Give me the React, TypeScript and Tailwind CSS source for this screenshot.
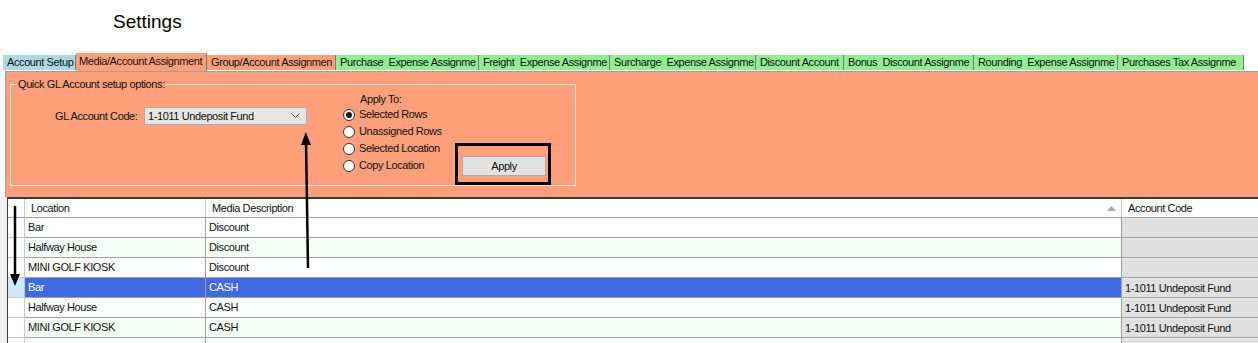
import React from "react";

const tabs: { label: string; w: number; bg: string; sel?: boolean }[] = [
  { label: "Account Setup", w: 73, bg: "bg-[#add8e6]" },
  { label: "Media/Account Assignment", w: 131, bg: "bg-[#ffa07a]", sel: true },
  { label: "Group/Account Assignmen", w: 129, bg: "bg-[#ffa07a]" },
  { label: "Purchase  Expense Assignme", w: 143, bg: "bg-[#90ee90]" },
  { label: "Freight  Expense Assignme", w: 131, bg: "bg-[#90ee90]" },
  { label: "Surcharge  Expense Assignme", w: 146, bg: "bg-[#90ee90]" },
  { label: "Discount Account", w: 88, bg: "bg-[#90ee90]" },
  { label: "Bonus  Discount Assignme", w: 130, bg: "bg-[#90ee90]" },
  { label: "Rounding  Expense Assignme", w: 144, bg: "bg-[#90ee90]" },
  { label: "Purchases Tax Assignme", w: 126, bg: "bg-[#90ee90]" },
];

const rows: { loc: string; media: string; acct: string; sel?: boolean }[] = [
  { loc: "Bar", media: "Discount", acct: "" },
  { loc: "Halfway House", media: "Discount", acct: "" },
  { loc: "MINI GOLF KIOSK", media: "Discount", acct: "" },
  { loc: "Bar", media: "CASH", acct: "1-1011 Undeposit Fund", sel: true },
  { loc: "Halfway House", media: "CASH", acct: "1-1011 Undeposit Fund" },
  { loc: "MINI GOLF KIOSK", media: "CASH", acct: "1-1011 Undeposit Fund" },
  { loc: "Bar", media: "PETTY CASH", acct: "2-1010 Ebony Chequing Acct" },
];

function Radio({ checked, label }: { checked?: boolean; label: string }) {
  return (
    <div className="flex items-center h-[17px] whitespace-nowrap">
      <div className="w-[12px] h-[12px] shrink-0 rounded-full border border-[#333333] bg-white flex items-center justify-center">
        {checked && <div className="w-[6px] h-[6px] rounded-full bg-[#1a1a1a]" />}
      </div>
      <span className="ml-[4px] text-[11px] tracking-[-0.4px] text-[#111]">{label}</span>
    </div>
  );
}

export default function App() {
  return (
    <div
      className="relative w-[1258px] h-[343px] overflow-hidden bg-white text-black"
      style={{ fontFamily: '"Liberation Sans", Arial, sans-serif' }}
    >
      {/* Title */}
      <div className="h-[53px] pl-[113px] pt-[11px] text-[19px] leading-[22px]">Settings</div>

      {/* Tabs */}
      <div className="flex items-end h-[18px] pl-[3px] relative z-10">
        {tabs.map((t) => (
          <div
            key={t.label}
            style={{ width: t.w }}
            className={`flex items-center overflow-hidden border-r border-[#7a7a7a] whitespace-pre text-[11px] tracking-[-0.4px] leading-none text-[#111] ${t.bg} ${
              t.sel ? "h-[18px] pl-[3px] pb-[2px]" : "h-[15px] pl-[4px] mb-[1px]"
            }`}
          >
            {t.label}
          </div>
        ))}
      </div>

      {/* Panel */}
      <div className="ml-[5px] border-l border-t border-[#a0a0a0] bg-[#ffa07a] h-[126px] relative">
        {/* group box */}
        <div className="absolute left-[4px] top-[12px] w-[566px] h-[102px] border border-[#f3e2da]">
          <div className="absolute left-[6px] -top-[7px] px-[1px] bg-[#ffa07a] text-[11px] tracking-[-0.4px] leading-[13px] text-[#111] whitespace-nowrap">
            Quick GL Account setup options:
          </div>
          <div className="flex pt-[7px] pl-[44px]">
            <div className="flex items-start pt-[15px] whitespace-nowrap">
              <span className="w-[80px] text-right text-[11px] tracking-[-0.4px] leading-[18px] mr-[9px] text-[#111]">
                GL Account Code:
              </span>
              <div className="w-[163px] h-[18px] bg-[#e5e5e5] border border-[#adadad] flex items-center justify-between pl-[3px] pr-[6px]">
                <span className="text-[11px] tracking-[-0.4px] text-[#111]">1-1011 Undeposit Fund</span>
                <svg width="9" height="6" viewBox="0 0 9 6">
                  <path d="M0.5 0.5 L4.5 4.5 L8.5 0.5" stroke="#555" strokeWidth="1" fill="none" />
                </svg>
              </div>
            </div>
            <div className="ml-[36px] w-[105px] flex flex-col">
              <span className="text-[11px] tracking-[-0.4px] leading-[14px] pl-[17px] text-[#111]">Apply To:</span>
              <Radio checked label="Selected Rows" />
              <Radio label="Unassigned Rows" />
              <Radio label="Selected Location" />
              <Radio label="Copy Location" />
            </div>
            <div className="ml-[14px] mt-[64px] relative">
              <div className="w-[84px] h-[20px] bg-[#e1e1e1] border border-[#adadad] flex items-center justify-center text-[11px] tracking-[-0.4px] text-[#111]">
                Apply
              </div>
              <div className="absolute -left-[7px] -top-[13px] w-[96px] h-[42px] border-[3px] border-black" />
            </div>
          </div>
        </div>
      </div>

      {/* Grid */}
      <div className="flex bg-[#f0f0f0]">
        <div className="w-[7px] shrink-0" />
        <div className="flex-1 border-l border-t-2 border-[#3a3a3a] bg-white">
          {/* header */}
          <div className="flex h-[19px] border-b border-[#a0a0a0] text-[11px] tracking-[-0.4px] text-[#111] whitespace-nowrap">
            <div className="w-[17px] shrink-0 border-r border-[#c8c8c8]" />
            <div className="w-[181px] shrink-0 border-r border-[#c8c8c8] pl-[6px] flex items-center">Location</div>
            <div className="w-[916px] shrink-0 border-r border-[#c8c8c8] pl-[6px] flex items-center justify-between pr-[5px]">
              <span>Media Description</span>
              <svg width="9" height="5" viewBox="0 0 9 5">
                <path d="M0 5 L4.5 0 L9 5 Z" fill="#a8a8a8" />
              </svg>
            </div>
            <div className="flex-1 pl-[6px] flex items-center">Account Code</div>
          </div>
          {rows.map((r, i) => {
            const alt = i % 2 === 1;
            const bg = r.sel ? "bg-[#4169e1] text-white" : alt ? "bg-[#f5fffa] text-[#111]" : "bg-white text-[#111]";
            return (
              <div key={i} className="flex h-[20px] text-[11px] tracking-[-0.4px] whitespace-nowrap">
                <div
                  className={`w-[17px] shrink-0 border-r border-b border-[#c8c8c8] ${
                    r.sel ? "bg-[#cce8ff]" : "bg-white"
                  }`}
                />
                <div className={`w-[181px] shrink-0 border-r border-b border-[#a0a0a0] pl-[3px] flex items-center ${bg}`}>
                  {r.loc}
                </div>
                <div className={`w-[916px] shrink-0 border-r border-b border-[#a0a0a0] pl-[3px] flex items-center ${bg}`}>
                  {r.media}
                </div>
                <div className="flex-1 bg-[#e0e0e0] border-b border-t border-t-[#ececec] border-b-[#a0a0a0] pl-[3px] flex items-center text-[#111] overflow-hidden">
                  {r.acct}
                </div>
              </div>
            );
          })}
        </div>
      </div>

      {/* Annotation arrows */}
      <svg className="absolute left-0 top-0 pointer-events-none" width="1258" height="343">
        <line x1="308" y1="268" x2="306" y2="140" stroke="black" strokeWidth="2.5" />
        <path d="M301 145 L305.8 132 L311 145 Z" fill="black" />
        <line x1="15" y1="206" x2="15" y2="278" stroke="black" strokeWidth="2.5" />
        <path d="M10 274 L15 286 L20 274 Z" fill="black" />
      </svg>
    </div>
  );
}
